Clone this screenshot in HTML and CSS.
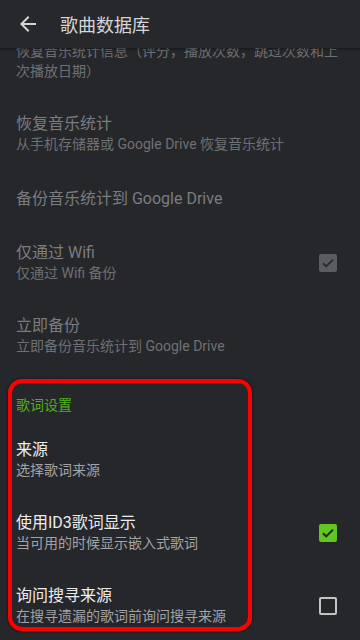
FILE: index.html
```html
<!DOCTYPE html>
<html lang="zh-CN">
<head>
  <meta charset="UTF-8" />
  <meta name="viewport" content="width=device-width, initial-scale=1.0"/>
  <title>歌曲数据库</title>
  <link rel="stylesheet" href="styles.css">
</head>
<body>

<div class="screen">
  <div class="toolbar">
    <svg class="back" viewBox="0 0 24 24" width="24" height="24">
      <path d="M20 11H7.83l5.59-5.59L12 4l-8 8 8 8 1.41-1.41L7.83 13H20v-2z" fill="#d4d4d6"/>
    </svg>
    <h1>歌曲数据库</h1>
  </div>

  <div class="list">
    <div class="pref first disabled">
      <div class="pref-text">
        <p class="summary">恢复音乐统计信息（评分，播放次数，跳过次数和上次播放日期）</p>
      </div>
    </div>

    <div class="pref disabled">
      <div class="pref-text">
        <p class="title">恢复音乐统计</p>
        <p class="summary">从手机存储器或 Google Drive 恢复音乐统计</p>
      </div>
    </div>

    <div class="pref single disabled">
      <div class="pref-text">
        <p class="title">备份音乐统计到 Google Drive</p>
      </div>
    </div>

    <div class="pref disabled">
      <div class="pref-text">
        <p class="title">仅通过 Wifi</p>
        <p class="summary">仅通过 Wifi 备份</p>
      </div>
      <span class="check on dim">
        <svg viewBox="0 0 18 18" width="18" height="18"><path d="M4 9.2l3.2 3.2L14 5.6" fill="none" stroke="#2a2b2f" stroke-width="2"/></svg>
      </span>
    </div>

    <div class="pref disabled">
      <div class="pref-text">
        <p class="title">立即备份</p>
        <p class="summary">立即备份音乐统计到 Google Drive</p>
      </div>
    </div>

    <div class="category">歌词设置</div>

    <div class="pref">
      <div class="pref-text">
        <p class="title">来源</p>
        <p class="summary">选择歌词来源</p>
      </div>
    </div>

    <div class="pref">
      <div class="pref-text">
        <p class="title">使用ID3歌词显示</p>
        <p class="summary">当可用的时候显示嵌入式歌词</p>
      </div>
      <span class="check on">
        <svg viewBox="0 0 18 18" width="18" height="18"><path d="M4 9.2l3.2 3.2L14 5.6" fill="none" stroke="#24252a" stroke-width="2"/></svg>
      </span>
    </div>

    <div class="pref">
      <div class="pref-text">
        <p class="title">询问搜寻来源</p>
        <p class="summary">在搜寻遗漏的歌词前询问搜寻来源</p>
      </div>
      <span class="check"></span>
    </div>
  </div>

  <div class="highlight"></div>
</div>

</body>
</html>
```

FILE: styles.css
```css
* {
  margin: 0; padding: 0;
  box-sizing: border-box;
}
body {
  background: #26272b;
  font-family: Roboto, 'Noto Sans CJK SC', sans-serif;
  width: 360px;
  height: 640px;
  overflow: hidden;
}
.screen {
  position: relative;
  height: 640px;
  display: flex;
  flex-direction: column;
  overflow: hidden;
}
.toolbar {
  height: 48px;
  flex: none;
  display: flex;
  align-items: center;
  padding-left: 16px;
  background: #27282c;
  box-shadow: 0 1px 3px rgba(0,0,0,0.45);
  position: relative;
  z-index: 2;
}
.toolbar .back {
  margin-right: 20px;
}
.toolbar h1 {
  font-size: 18px;
  font-weight: normal;
  color: #d6d6d8;
}
.list {
  flex: 1;
  overflow: hidden;
}
.pref {
  display: flex;
  align-items: center;
  padding: 16px 0 16px 16px;
  min-height: 73px;
}
.pref.first {
  margin-top: -7px;
  min-height: 0;
  padding-top: 0;
}
.pref.single {
  min-height: 56px;
}
.pref-text {
  flex: 1;
  padding-right: 16px;
}
.title {
  font-size: 16px;
  line-height: 21px;
  color: #ececee;
}
.summary {
  font-size: 14px;
  line-height: 20px;
  color: #a2a3a6;
}
.disabled .title {
  color: #7b7c7f;
}
.disabled .summary {
  color: #6f7073;
}
.category {
  padding: 23px 16px 8px;
  font-size: 14px;
  line-height: 20px;
  color: #4fb01c;
}
.check {
  flex: none;
  width: 18px;
  height: 18px;
  margin-right: 23px;
  border: 2px solid #c4c4c6;
  border-radius: 2px;
  display: flex;
}
.check svg {
  margin: -2px;
}
.check.on {
  background: #62c620;
  border-color: #62c620;
}
.check.on.dim {
  background: #5b5c60;
  border-color: #5b5c60;
}
.highlight {
  position: absolute;
  left: 8px;
  top: 379px;
  width: 244px;
  height: 252px;
  border: 4px solid #ff0000;
  border-radius: 14px;
  box-shadow: 0 0 3px rgba(0,0,0,0.6);
  pointer-events: none;
}
```
